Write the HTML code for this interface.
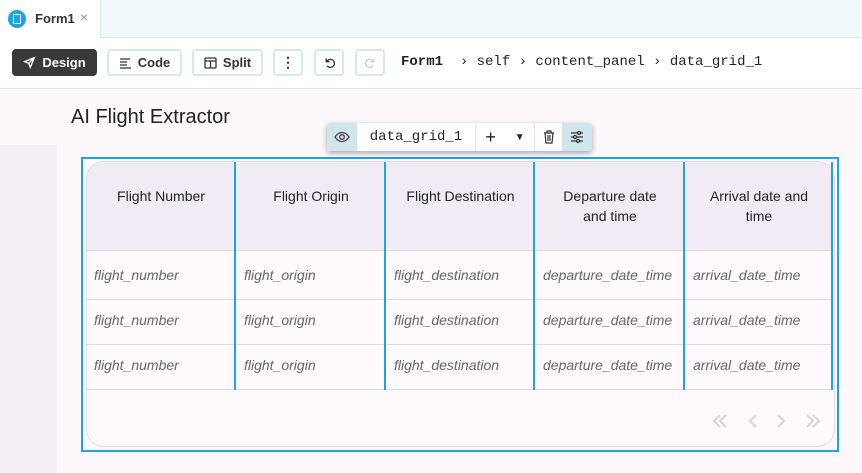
<!DOCTYPE html>
<html><head><meta charset="utf-8"><style>
*{margin:0;padding:0;box-sizing:border-box}
body{width:862px;height:473px;overflow:hidden;background:#fdf8fc;font-family:"Liberation Sans",sans-serif;position:relative}
.abs{position:absolute}
.btn{position:absolute;top:49;height:27px;border:2px solid #d4e8ef;border-radius:4px;background:#fff;font-size:13px;font-weight:bold;color:#333;display:flex;align-items:center;justify-content:center;gap:6px}
.mono{font-family:"Liberation Mono",monospace}
.hd{position:absolute;top:162px;height:88px;padding-top:24px;text-align:center;font-size:14px;color:#222;line-height:20px}
.cell{position:absolute;font-size:14px;font-style:italic;color:#666}
.vl{position:absolute;top:162px;height:228px;width:2px;background:#1aa6e6}
.hl{position:absolute;left:87px;width:746px;height:1px;background:#e0dce4}
</style></head><body>
<div class="abs" style="left:0;top:0;width:862px;height:38px;background:#f1f9fc;border-bottom:1px solid #d4e8ef"></div>
<div class="abs" style="left:0;top:0;width:101px;height:39px;background:#fff;border-right:1px solid #d4e8ef"></div>
<div class="abs" style="left:8px;top:10px;width:18px;height:18px;border-radius:50%;background:#1aa6e6"><div style="position:absolute;left:5px;top:4px;width:8px;height:10px;border:1.3px solid #fff;border-radius:1px"></div></div>
<div class="abs" style="left:35px;top:11px;font-size:13px;font-weight:bold;color:#333">Form1</div>
<div class="abs" style="left:80px;top:9px;font-size:14px;color:#999">×</div>
<div class="abs" style="left:0;top:38px;width:862px;height:51px;background:#fff;border-bottom:1px solid #d4e8ef"></div>
<div class="btn" style="left:12px;top:49px;width:85px;background:#3a3a3a;border-color:#3a3a3a;color:#fff"><svg width="13" height="13" viewBox="0 0 16 16" fill="none" stroke="#fff" stroke-width="1.6"><path d="M14 2L2 7l5 2 2 5z M7 9l7-7"/></svg>Design</div>
<div class="btn" style="left:107px;top:49px;width:75px"><svg width="13" height="12" viewBox="0 0 13 12" stroke="#333" stroke-width="1.3"><path d="M1 2h10M1 5h7M1 8h7M1 11h11"/></svg>Code</div>
<div class="btn" style="left:192px;top:49px;width:71px"><svg width="13" height="12" viewBox="0 0 13 12" fill="none" stroke="#333" stroke-width="1.3"><rect x="1" y="1" width="11" height="10" rx="1"/><path d="M1 4h11M6.5 4v7"/></svg>Split</div>
<div class="btn" style="left:273px;top:49px;width:30px;font-size:14px">⋮</div>
<div class="btn" style="left:314px;top:49px;width:30px"><svg width="13" height="13" viewBox="0 0 16 16" fill="none" stroke="#333" stroke-width="1.6"><path d="M4 3v4h4M4.5 7A5 5 0 1 1 5 12"/></svg></div>
<div class="btn" style="left:355px;top:49px;width:30px"><svg width="13" height="13" viewBox="0 0 16 16" fill="none" stroke="#ccc" stroke-width="1.6"><path d="M12 3v4H8M11.5 7A5 5 0 1 0 11 12"/></svg></div>
<div class="abs mono" style="left:401px;top:54px;font-size:14px;color:#222;white-space:pre"><b>Form1</b>  › self › content_panel › data_grid_1</div>
<div class="abs" style="left:0;top:145px;width:57px;height:328px;background:#f3eff5"></div>
<div class="abs" style="left:71px;top:106px;font-size:20px;color:#222">AI Flight Extractor</div>
<div class="abs" style="left:81px;top:157px;width:758px;height:295px;border:2px solid #1aa6e6"></div>
<div class="abs" style="left:86px;top:161px;width:749px;height:286px;border:1px solid #e0dce4;border-radius:18px;background:#fdf9fd;overflow:hidden">
<div style="position:absolute;left:0;top:0;width:749px;height:89px;background:#f1ebf5;border-bottom:1px solid #e0dce4"></div></div>
<div class="hd" style="left:87px;width:148px">Flight Number</div>
<div class="hd" style="left:237px;width:148px">Flight Origin</div>
<div class="hd" style="left:387px;width:147px">Flight Destination</div>
<div class="hd" style="left:536px;width:148px">Departure date<br>and time</div>
<div class="hd" style="left:686px;width:146px">Arrival date and<br>time</div>
<div class="hl" style="top:299px"></div><div class="hl" style="top:344px"></div><div class="hl" style="top:389px"></div>
<div class="vl" style="left:234px"></div><div class="vl" style="left:384px"></div><div class="vl" style="left:533px"></div><div class="vl" style="left:683px"></div><div class="vl" style="left:831px"></div>
<div class="cell" style="left:94px;top:267px">flight_number</div><div class="cell" style="left:244px;top:267px">flight_origin</div><div class="cell" style="left:394px;top:267px">flight_destination</div><div class="cell" style="left:543px;top:267px">departure_date_time</div><div class="cell" style="left:693px;top:267px">arrival_date_time</div>
<div class="cell" style="left:94px;top:312px">flight_number</div><div class="cell" style="left:244px;top:312px">flight_origin</div><div class="cell" style="left:394px;top:312px">flight_destination</div><div class="cell" style="left:543px;top:312px">departure_date_time</div><div class="cell" style="left:693px;top:312px">arrival_date_time</div>
<div class="cell" style="left:94px;top:357px">flight_number</div><div class="cell" style="left:244px;top:357px">flight_origin</div><div class="cell" style="left:394px;top:357px">flight_destination</div><div class="cell" style="left:543px;top:357px">departure_date_time</div><div class="cell" style="left:693px;top:357px">arrival_date_time</div>
<svg class="abs" style="left:710px;top:411px" width="115" height="20" viewBox="0 0 115 20" fill="none" stroke="#d6d3d8" stroke-width="2"><path d="M10 4l-6 6 6 6M16 4l-6 6 6 6M46 4l-6 6 6 6M68 4l6 6-6 6M97 4l6 6-6 6M103 4l6 6-6 6"/></svg>
<div class="abs" style="left:327px;top:123px;width:265px;height:28px;background:#fff;border-radius:3px;box-shadow:0 2px 6px rgba(0,0,0,.35);display:flex;overflow:hidden">
<div style="width:30px;background:#d1e6ec;display:flex;align-items:center;justify-content:center"><svg width="16" height="12" viewBox="0 0 16 12" fill="none" stroke="#444" stroke-width="1.3"><path d="M1 6c4-6 10-6 14 0c-4 6-10 6-14 0z"/><circle cx="8" cy="6" r="2.3"/></svg></div>
<div class="mono" style="width:119px;border-right:1px solid #d4e8ef;font-size:14px;color:#222;display:flex;align-items:center;justify-content:center">data_grid_1</div>
<div style="width:59px;border-right:1px solid #d4e8ef;display:flex;align-items:center;justify-content:space-around;font-size:18px;color:#222"><span>+</span><span style="font-size:10px">▼</span></div>
<div style="width:27px;display:flex;align-items:center;justify-content:center"><svg width="12" height="14" viewBox="0 0 12 14" fill="none" stroke="#333" stroke-width="1.2"><path d="M1 3h10M4 3V1h4v2M2 3l1 10h6l1-10M5 5v6M7 5v6"/></svg></div>
<div style="flex:1;background:#d1e6ec;display:flex;align-items:center;justify-content:center"><svg width="14" height="14" viewBox="0 0 14 14" fill="none" stroke="#333" stroke-width="1.2"><path d="M1 3h12M1 7h12M1 11h12"/><circle cx="9" cy="3" r="1.5" fill="#d1e6ec"/><circle cx="5" cy="7" r="1.5" fill="#d1e6ec"/><circle cx="8" cy="11" r="1.5" fill="#d1e6ec"/></svg></div>
</div>
</body></html>
